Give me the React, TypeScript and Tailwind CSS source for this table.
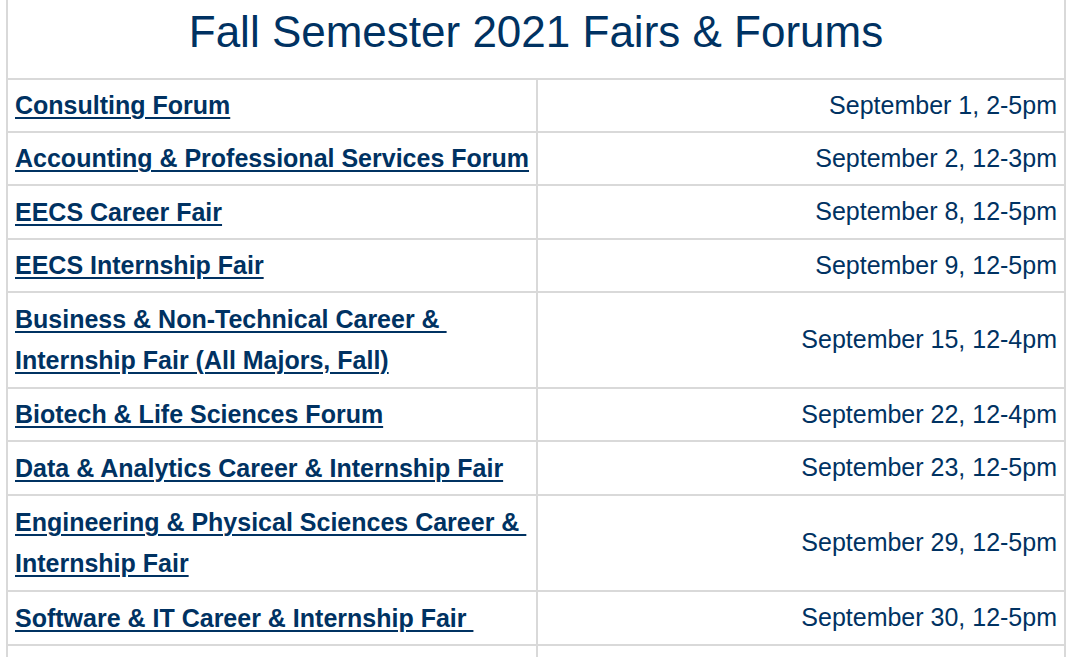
import React from 'react';

type Fair = {
    lines: string[];
    date: string;
    h: string;
};

const fairs: Fair[] = [
    { lines: ['Consulting Forum'], date: 'September 1, 2-5pm', h: 'h-[53px]' },
    { lines: ['Accounting & Professional Services Forum'], date: 'September 2, 12-3pm', h: 'h-[53px]' },
    { lines: ['EECS Career Fair'], date: 'September 8, 12-5pm', h: 'h-[54px]' },
    { lines: ['EECS Internship Fair'], date: 'September 9, 12-5pm', h: 'h-[53px]' },
    { lines: ['Business & Non-Technical Career &\u00a0', 'Internship Fair (All Majors, Fall)'], date: 'September 15, 12-4pm', h: 'h-[96px]' },
    { lines: ['Biotech & Life Sciences Forum'], date: 'September 22, 12-4pm', h: 'h-[53px]' },
    { lines: ['Data & Analytics Career & Internship Fair'], date: 'September 23, 12-5pm', h: 'h-[54px]' },
    { lines: ['Engineering & Physical Sciences Career &\u00a0', 'Internship Fair'], date: 'September 29, 12-5pm', h: 'h-[96px]' },
    { lines: ['Software & IT Career & Internship Fair\u00a0'], date: 'September 30, 12-5pm', h: 'h-[54px]' },
];

const FairRow: React.FC<{ fair: Fair }> = ({ fair }) => (
    <>
        <div className={`flex flex-col justify-center border-b-2 border-r-2 border-[#d9d9d9] pl-[7px] ${fair.h}`}>
            {fair.lines.map((line, i) => (
                <a
                    key={i}
                    href="#"
                    className="block whitespace-pre font-bold text-[25px] leading-[41px] text-[#003262] underline decoration-2 underline-offset-[3px]"
                >
                    {line}
                </a>
            ))}
        </div>
        <div className={`flex items-center justify-end border-b-2 border-[#d9d9d9] pr-[7px] text-[25px] text-[#003262] ${fair.h}`}>
            {fair.date}
        </div>
    </>
);

export default function App() {
    return (
        <div className="h-[657px] w-[1080px] overflow-hidden bg-white font-['Liberation_Sans',Arial,sans-serif]">
            <div className="ml-[6px] w-[1060px] border-x-2 border-[#d9d9d9]">
                <div className="flex h-[80px] items-center justify-center border-b-2 border-[#d9d9d9] pb-[14px] text-[44px] text-[#003262]">
                    Fall Semester 2021 Fairs &amp; Forums
                </div>
                <div className="grid grid-cols-[530px_1fr]">
                    {fairs.map((fair, i) => (
                        <FairRow key={i} fair={fair} />
                    ))}
                    <div className="h-[53px] border-r-2 border-[#d9d9d9]" />
                    <div className="h-[53px]" />
                </div>
            </div>
        </div>
    );
}
